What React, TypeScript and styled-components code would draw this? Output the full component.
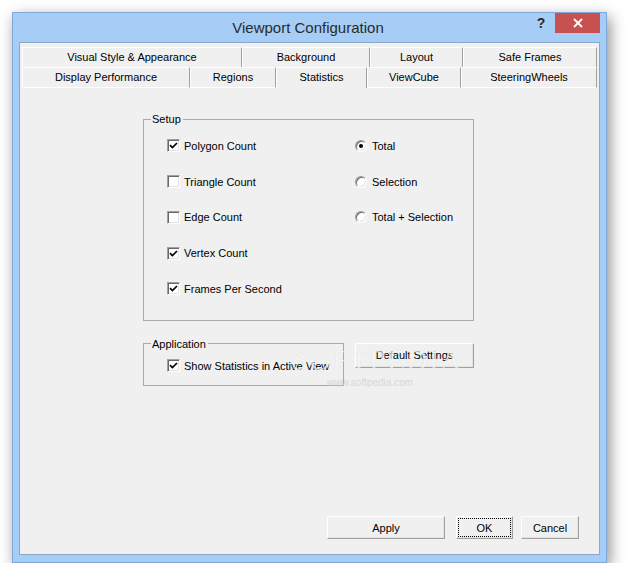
import styled, { createGlobalStyle } from "styled-components";

const GlobalStyle = createGlobalStyle`
  html, body {
    margin: 0;
    background: #ffffff;
  }
  body {
    font-family: "Liberation Sans", Arial, sans-serif;
    font-size: 11px;
    color: #000;
  }
`;

const Page = styled.div`
  padding: 12px 0 0 12px;
`;

const Window = styled.div`
  position: relative;
  width: 595px;
  height: 551px;
  box-sizing: border-box;
  display: flex;
  flex-direction: column;
  background: #a5cdf6;
  border: 1px solid #80a9d9;
  box-shadow: 3px 5px 14px rgba(0, 0, 0, 0.45);
`;

const TitleBar = styled.div`
  height: 29px;
  display: grid;
  grid-template-columns: 1fr auto 1fr;
  align-items: start;
  padding-right: 6px;
`;

const Title = styled.div`
  grid-column: 2;
  font-size: 15px;
  line-height: 29px;
  color: #2a2a2a;
  padding-left: 3px;
`;

const Controls = styled.div`
  grid-column: 3;
  justify-self: end;
  display: flex;
  align-items: flex-start;
`;

const HelpButton = styled.div`
  width: 28px;
  height: 20px;
  line-height: 20px;
  text-align: center;
  font-weight: bold;
  font-size: 14px;
  color: #2b2b2b;
`;

const CloseButton = styled.div`
  width: 45px;
  height: 20px;
  background: #c75050;
  display: flex;
  align-items: center;
  justify-content: center;
`;

const Client = styled.div`
  flex: 1;
  margin: 0 6px 7px;
  border: 1px solid #8aa8cc;
  background: #f0f0f0;
  display: flex;
  flex-direction: column;
  padding-top: 4px;
`;

const TabStrip = styled.div`
  margin: 0 2px;
  display: flex;
  flex-direction: column;
`;

const TabRow = styled.div`
  display: flex;
`;

const Tab = styled.div<{ $w: number; $front?: boolean; $active?: boolean }>`
  width: ${(p) => p.$w}px;
  height: ${(p) => (p.$front ? 21 : 20)}px;
  box-sizing: border-box;
  display: flex;
  align-items: center;
  justify-content: center;
  padding-bottom: ${(p) => (p.$active ? 2 : p.$front ? 1 : 2)}px;
  border-top: 1px solid #ffffff;
  border-left: 1px solid #ffffff;
  border-right: 1px solid #a0a0a0;
  border-bottom: ${(p) => (p.$front && !p.$active ? "1px solid #ffffff" : "0")};
  background: #f0f0f0;
`;

const Pane = styled.div`
  flex: 1;
  display: flex;
  flex-direction: column;
  align-items: flex-start;
  padding: 24px 0 0 123px;
`;

const Group = styled.fieldset<{ $w: number }>`
  margin: 0;
  padding: 0;
  min-width: 0;
  width: ${(p) => p.$w}px;
  box-sizing: border-box;
  border: 1px solid #a9a9a9;
`;

const Legend = styled.legend`
  margin-left: 7px;
  padding: 0 2px 0 1px;
  line-height: 14px;
`;

const SetupGrid = styled.div`
  display: grid;
  grid-template-columns: 188px 1fr;
  grid-auto-rows: 35.75px;
  align-items: center;
  padding: 2px 0 13px 23px;
`;

const AppBody = styled.div`
  height: 20px;
  display: flex;
  align-items: center;
  padding: 5px 0 9px 23px;
`;

const LowerRow = styled.div`
  display: flex;
  align-items: flex-start;
  gap: 11px;
  margin-top: 16px;
`;

const Option = styled.label`
  display: flex;
  align-items: center;
  gap: 4px;
  white-space: nowrap;
`;

const CheckBox = styled.span`
  width: 13px;
  height: 13px;
  box-sizing: border-box;
  background: #ffffff;
  border: 1px solid;
  border-color: #a0a0a0 #ffffff #ffffff #a0a0a0;
  box-shadow: inset 1px 1px 0 #696969, inset -1px -1px 0 #e3e3e3;
  display: flex;
  align-items: center;
  justify-content: center;
`;

const Radio = styled.span<{ $on?: boolean }>`
  position: relative;
  width: 12px;
  height: 12px;
  margin-right: 1px;
  box-sizing: border-box;
  border-radius: 50%;
  background: #ffffff;
  border: 1px solid;
  border-color: #9a9a9a #ffffff #ffffff #9a9a9a;
  box-shadow: inset 1px 1px 0 #6e6e6e, inset -1px -1px 0 #e3e3e3;

  &::after {
    content: "";
    display: ${(p) => (p.$on ? "block" : "none")};
    position: absolute;
    left: 3px;
    top: 3px;
    width: 4px;
    height: 4px;
    border-radius: 50%;
    background: #000;
  }
`;

const Button = styled.button<{ $w: number; $h?: number; $focus?: boolean }>`
  width: ${(p) => p.$w}px;
  height: ${(p) => p.$h ?? 23}px;
  box-sizing: border-box;
  padding: 0;
  font-family: "Liberation Sans", Arial, sans-serif;
  font-size: 11px;
  color: #000;
  background: #f0f0f0;
  border: 1px solid;
  border-color: #ffffff #a0a0a0 #a0a0a0 #ffffff;
  box-shadow: inset -1px -1px 0 #e3e3e3;
  outline: ${(p) => (p.$focus ? "1px dotted #000" : "none")};
  outline-offset: -3px;
`;

const DefaultsButton = styled(Button)`
  margin-top: 6px;
`;

const ApplyButton = styled(Button)`
  margin-right: 3px;
`;

const ButtonBar = styled.div`
  display: flex;
  justify-content: flex-end;
  gap: 8px;
  padding: 0 20px 15px 0;
`;

const Watermark = styled.div`
  position: absolute;
  left: 296px;
  top: 332px;
  width: 136px;
  display: flex;
  flex-direction: column;
  align-items: center;
  pointer-events: none;
`;

const WatermarkLogo = styled.div`
  font-family: "Liberation Serif", serif;
  font-size: 30px;
  line-height: 30px;
  letter-spacing: 1px;
  color: rgba(255, 255, 255, 0.7);
  text-shadow: 0 0 1px rgba(0, 0, 0, 0.1);
`;

const WatermarkUrl = styled.div`
  font-size: 10px;
  line-height: 12px;
  color: rgba(205, 205, 205, 0.75);
  margin: 2px 14px 0 0;
`;

function Check() {
  return (
    <CheckBox>
      <svg width="9" height="9" viewBox="0 0 9 9">
        <path d="M1 4.2 L3.4 6.6 L8 2" fill="none" stroke="#000" strokeWidth="1.7" />
      </svg>
    </CheckBox>
  );
}

function Empty() {
  return <CheckBox />;
}

const row1 = [
  { label: "Visual Style & Appearance", w: 220 },
  { label: "Background", w: 128 },
  { label: "Layout", w: 93 },
  { label: "Safe Frames", w: 134 },
];

const row2 = [
  { label: "Display Performance", w: 168 },
  { label: "Regions", w: 86 },
  { label: "Statistics", w: 91 },
  { label: "ViewCube", w: 94 },
  { label: "SteeringWheels", w: 136 },
];

export default function App() {
  return (
    <Page>
      <GlobalStyle />
      <Window>
        <TitleBar>
          <Title>Viewport Configuration</Title>
          <Controls>
            <HelpButton>?</HelpButton>
            <CloseButton>
              <svg width="10" height="10" viewBox="0 0 10 10">
                <path d="M1 1 L9 9 M9 1 L1 9" stroke="#fff" strokeWidth="1.8" />
              </svg>
            </CloseButton>
          </Controls>
        </TitleBar>
        <Client>
          <TabStrip>
            <TabRow>
              {row1.map((t) => (
                <Tab key={t.label} $w={t.w}>
                  {t.label}
                </Tab>
              ))}
            </TabRow>
            <TabRow>
              {row2.map((t) => (
                <Tab key={t.label} $w={t.w} $front $active={t.label === "Statistics"}>
                  {t.label}
                </Tab>
              ))}
            </TabRow>
          </TabStrip>
          <Pane>
            <Group $w={331}>
              <Legend>Setup</Legend>
              <SetupGrid>
                <Option>
                  <Check />
                  Polygon Count
                </Option>
                <Option>
                  <Radio $on />
                  Total
                </Option>
                <Option>
                  <Empty />
                  Triangle Count
                </Option>
                <Option>
                  <Radio />
                  Selection
                </Option>
                <Option>
                  <Empty />
                  Edge Count
                </Option>
                <Option>
                  <Radio />
                  Total + Selection
                </Option>
                <Option>
                  <Check />
                  Vertex Count
                </Option>
                <span />
                <Option>
                  <Check />
                  Frames Per Second
                </Option>
              </SetupGrid>
            </Group>
            <LowerRow>
              <Group $w={201}>
                <Legend>Application</Legend>
                <AppBody>
                  <Option>
                    <Check />
                    Show Statistics in Active View
                  </Option>
                </AppBody>
              </Group>
              <DefaultsButton $w={119} $h={25}>
                Default Settings
              </DefaultsButton>
            </LowerRow>
          </Pane>
          <ButtonBar>
            <ApplyButton $w={118}>Apply</ApplyButton>
            <Button $w={57} $focus>
              OK
            </Button>
            <Button $w={58}>Cancel</Button>
          </ButtonBar>
        </Client>
        <Watermark>
          <WatermarkLogo>SOFTPEDIA</WatermarkLogo>
          <WatermarkUrl>www.softpedia.com</WatermarkUrl>
        </Watermark>
      </Window>
    </Page>
  );
}
